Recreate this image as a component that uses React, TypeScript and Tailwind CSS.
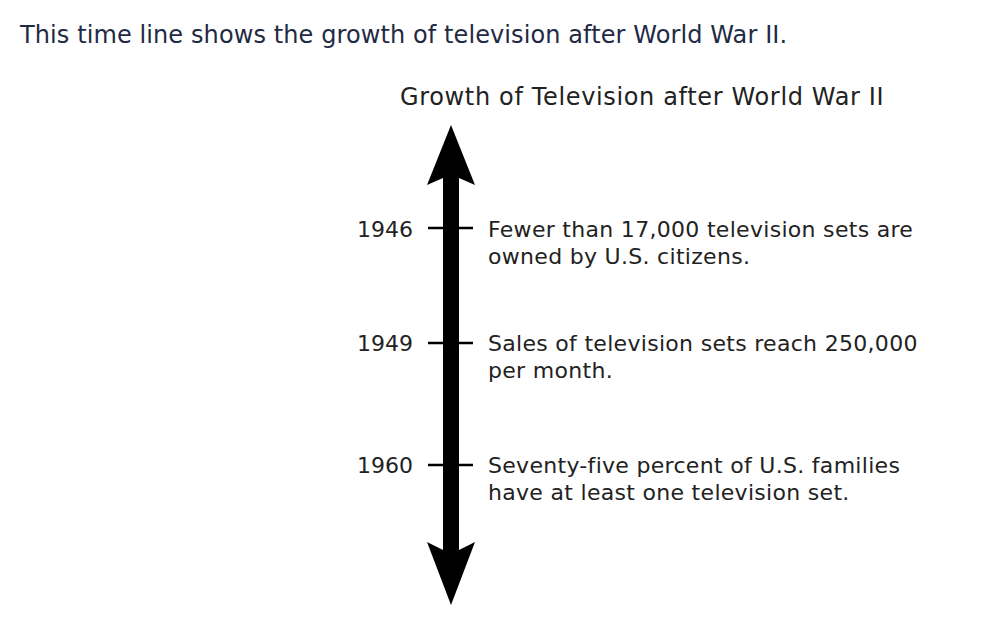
import React from "react";

interface Event {
  year: string;
  lines: string[];
}

const events: Event[] = [
  { year: "1946", lines: ["Fewer than 17,000 television sets are", "owned by U.S. citizens."] },
  { year: "1949", lines: ["Sales of television sets reach 250,000", "per month."] },
  { year: "1960", lines: ["Seventy-five percent of U.S. families", "have at least one television set."] },
];

const rowMargins = ["mt-[92px]", "mt-[60px]", "mt-[68px]"];
const yearMargins = ["mt-[92px]", "mt-[87px]", "mt-[95px]"];

function TimelineArrow() {
  return (
    <svg width="54" height="484" viewBox="0 0 54 484" className="shrink-0">
      <path
        d="M26 1 L50 61 L34 54 L34 426 L50 418 L26 481 L2 418 L18 426 L18 54 L2 61 Z"
        fill="#000"
      />
      {[104, 219, 341].map((y) => (
        <line key={y} x1="3" x2="48" y1={y} y2={y} stroke="#000" strokeWidth="2.5" />
      ))}
    </svg>
  );
}

export default function App() {
  return (
    <div
      className="w-[990px] h-[626px] bg-white flex flex-col overflow-hidden"
      style={{ fontFamily: '"DejaVu Sans", Verdana, sans-serif' }}
    >
      <p className="pl-[20px] pt-[21px] text-[24px] leading-[28px] text-[#1f2a44] tracking-[0.1px]">
        This time line shows the growth of television after World War II.
      </p>

      <h2 className="pl-[400px] mt-[34px] text-[24px] leading-[28px] text-[#222] tracking-[0.65px]">
        Growth of Television after World War II
      </h2>

      <div className="flex mt-[13px] pl-[333px]">
        <div className="w-[80px] flex flex-col items-end text-[22px] leading-[27px] text-[#222]">
          {events.map((e, i) => (
            <span key={e.year} className={yearMargins[i]}>
              {e.year}
            </span>
          ))}
        </div>

        <div className="ml-[12px]">
          <TimelineArrow />
        </div>

        <div className="ml-[9px] flex flex-col text-[22px] leading-[27px] text-[#222] tracking-[0.3px]">
          {events.map((e, i) => (
            <div key={e.year} className={rowMargins[i]}>
              {e.lines.map((l) => (
                <div key={l}>{l}</div>
              ))}
            </div>
          ))}
        </div>
      </div>
    </div>
  );
}
